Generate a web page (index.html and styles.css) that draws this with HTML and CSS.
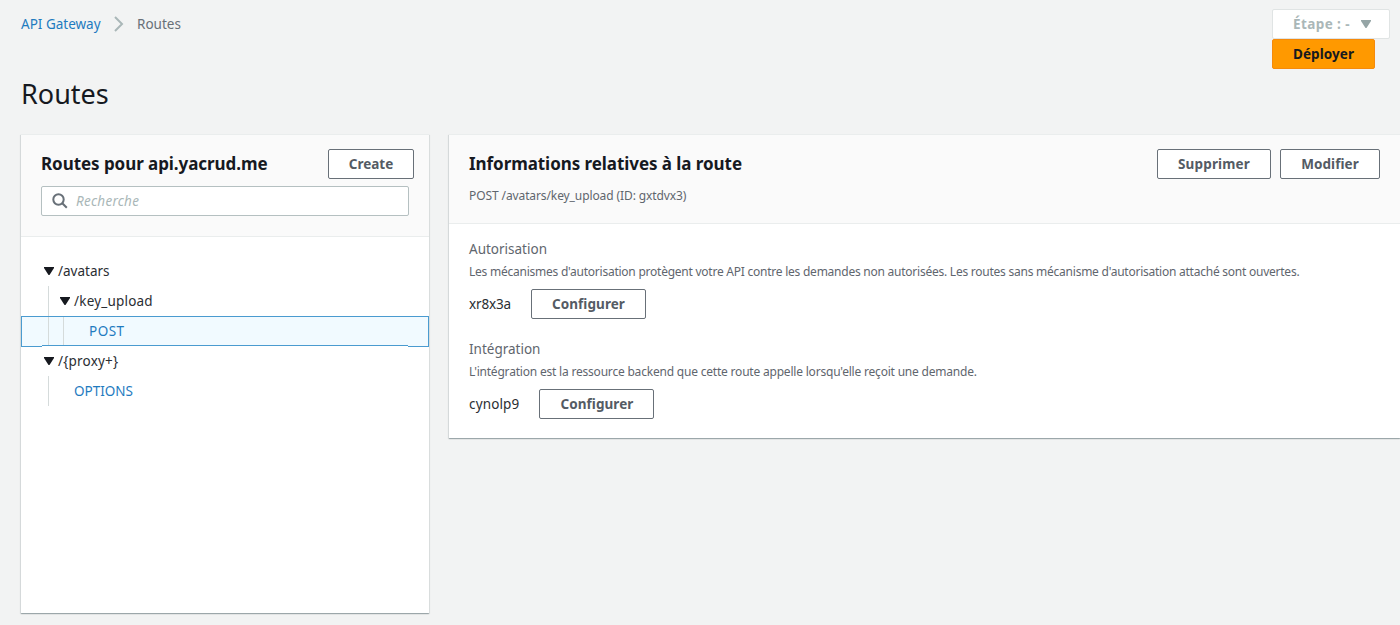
FILE: index.html
```html
<!DOCTYPE html>
<html lang="fr">
<head>
<meta charset="utf-8">
<title>API Gateway - Routes</title>
<link rel="stylesheet" href="styles.css">
</head>
<body>
<header class="topbar">
  <nav class="breadcrumb">
    <a class="crumb-link" href="#">API Gateway</a>
    <svg class="crumb-sep" width="10" height="16" viewBox="0 0 10 16"><path d="M1 1l7 7-7 7"/></svg>
    <span class="crumb-current">Routes</span>
  </nav>
  <div class="stage">
    <button class="btn btn-stage"><span class="stage-name">Étape : -</span><svg width="12" height="10" viewBox="0 0 12 10"><path d="M1 1h10v1L6.500 9h-1L1 2z"/></svg></button>
    <button class="btn btn-primary">Déployer</button>
  </div>
</header>
<h1 class="title">Routes</h1>
<main class="columns">
  <section class="panel routes">
    <div class="panel-head">
      <div class="head-row">
        <h2 class="heading">Routes pour api.yacrud.me</h2>
        <button class="btn btn-create">Create</button>
      </div>
      <div class="search">
        <svg width="16" height="16" viewBox="0 0 16 16"><circle cx="6.500" cy="6.500" r="5.200"/><path d="M10.300 10.300l4.500 4.500"/></svg>
        <span class="placeholder">Recherche</span>
      </div>
    </div>
    <div class="tree">
      <div class="node"><svg class="caret" width="12" height="10" viewBox="0 0 12 10"><path d="M1 1h10v1L6.500 9h-1L1 2z"/></svg><span>/avatars</span></div>
      <div class="node"><i class="guide"></i><svg class="caret" width="12" height="10" viewBox="0 0 12 10"><path d="M1 1h10v1L6.500 9h-1L1 2z"/></svg><span class="path-key">/key_upload</span></div>
      <div class="node selected"><i class="guide"></i><i class="guide"></i><a class="method method-post" href="#">POST</a></div>
      <div class="node"><svg class="caret" width="12" height="10" viewBox="0 0 12 10"><path d="M1 1h10v1L6.500 9h-1L1 2z"/></svg><span class="path-proxy">/{proxy+}</span></div>
      <div class="node"><i class="guide"></i><a class="method" href="#">OPTIONS</a></div>
    </div>
  </section>
  <section class="panel details">
    <div class="panel-head details-head">
      <div>
        <h2 class="heading">Informations relatives à la route</h2>
        <p class="route-id">POST /avatars/key_upload (ID: gxtdvx3)</p>
      </div>
      <div class="actions">
        <button class="btn btn-delete">Supprimer</button>
        <button class="btn btn-edit">Modifier</button>
      </div>
    </div>
    <div class="details-body">
      <div class="group">
        <h3 class="label">Autorisation</h3>
        <p class="hint">Les mécanismes d'autorisation protègent votre API contre les demandes non autorisées. Les routes sans mécanisme d'autorisation attaché sont ouvertes.</p>
        <div class="value"><span class="value-auth">xr8x3a</span><button class="btn btn-config">Configurer</button></div>
      </div>
      <div class="group">
        <h3 class="label">Intégration</h3>
        <p class="hint hint-integ">L'intégration est la ressource backend que cette route appelle lorsqu'elle reçoit une demande.</p>
        <div class="value"><span class="value-integ">cynolp9</span><button class="btn btn-config">Configurer</button></div>
      </div>
    </div>
  </section>
</main>
</body>
</html>
```
FILE: styles.css
```css
*, *::after { box-sizing: border-box; }
body {
  margin: 0;
  width: 1400px;
  height: 625px;
  overflow: hidden;
  background: #f2f3f3;
  color: #16191f;
  font: 14px/20px "Noto Sans", "Open Sans", sans-serif;
}
h1, h2, h3, p { margin: 0; }
a { color: #1f7bbf; text-decoration: none; }
svg { flex: none; }
.topbar { display: flex; justify-content: space-between; height: 69px; padding: 9px 10px 0 21px; }
.breadcrumb { display: flex; align-items: center; height: 30px; font-size: 13.500px; color: #687078; }
.crumb-link { width: 93px; }
.crumb-sep { width: 10px; margin-right: 13px; fill: none; stroke: #aab7b8; stroke-width: 2; }
.stage { display: flex; flex-direction: column; align-items: flex-start; width: 118px; }
.btn {
  display: inline-flex;
  align-items: center;
  justify-content: center;
  height: 30px;
  padding: 0 0 1px;
  border: 1px solid #687078;
  border-radius: 2px;
  background: #fff;
  color: #545b64;
  font: 700 13.500px/20px "Noto Sans", "Open Sans", sans-serif;
  letter-spacing: .07px;
  white-space: nowrap;
}
.btn-stage { width: 118px; gap: 10px; padding-left: 3px; border-color: #e0e4e4; color: #aab7b8; }
.stage-name { letter-spacing: .4px; }
.btn-stage svg { margin-top: 1px; fill: #95a5a6; }
.btn-primary { width: 103px; border-color: #f58a0c; background: #ff9900; color: #16191f; }
.title { height: 65px; padding: 8px 0 0 21px; font-size: 27px; font-weight: 400; line-height: 34px; }
.columns { display: grid; grid-template-columns: 408px 951px; column-gap: 20px; align-items: start; padding-left: 21px; }
.panel { border-top: 1px solid #eaeded; background: #fff; box-shadow: 0 1px 1px 0 rgba(0,28,36,.25), 1px 1px 1px 0 rgba(0,28,36,.06), -1px 1px 1px 0 rgba(0,28,36,.08); }
.routes { height: 479px; }
.details { height: 304px; }
.panel-head { height: 102px; padding: 14px 15px 0 20px; border-bottom: 1px solid #eaeded; background: #fafafa; }
.head-row { display: flex; justify-content: space-between; height: 37px; }
.heading { font-size: 17px; font-weight: 700; line-height: 29px; letter-spacing: -.06px; white-space: nowrap; }
.btn-create { width: 86px; letter-spacing: 0; }
.search { display: flex; align-items: center; width: 368px; height: 30px; padding-left: 10px; border: 1px solid #b5c0c1; border-radius: 2px; background: #fff; }
.search svg { margin-right: 8px; fill: none; stroke: #687078; stroke-width: 2; }
.placeholder { color: #aab7b8; font-size: 13.500px; font-style: italic; letter-spacing: .25px; }
.tree { padding-top: 19px; color: #2a2e33; }
.node { display: flex; align-items: center; height: 30px; padding-left: 22px; font-size: 13.500px; }
.caret { margin-right: 3px; fill: #16191f; }
.guide { width: 1px; height: 30px; margin: 0 10px 0 5px; background: #d5dbdb; }
.guide + .guide { margin-left: 4px; }
.path-key { letter-spacing: .2px; }
.path-proxy { letter-spacing: .2px; }
.selected { position: relative; height: 31px; margin-bottom: -1px; padding: 0 0 1px 21px; border: 1px solid #4a9bd0; background: #f1faff; }
.selected .guide { height: 29px; margin-bottom: -1px; }
/* The bottom outline sits one pixel higher between the row's gutters. */
.selected::after { content: ""; position: absolute; left: 20px; right: 20px; bottom: -1px; height: 2px; border-top: 1px solid #4a9bd0; background: #fff; }
.method { margin-left: 15px; }
.method-post { margin-top: -1px; letter-spacing: .5px; }
.details-head { display: flex; justify-content: space-between; height: 89px; padding-right: 20px; }
.route-id { padding-top: 8px; color: #5f666e; font-size: 12px; line-height: 20px; letter-spacing: -.1px; }
.actions { display: flex; gap: 9px; }
.btn-delete { width: 114px; letter-spacing: .15px; }
.btn-edit { width: 100px; }
.details-body { padding: 15px 20px; }
.group { height: 100px; }
.label { color: #5f666e; font-size: 13.500px; font-weight: 400; line-height: 20px; }
.hint { height: 30px; padding-top: 3px; color: #5f666e; font-size: 12px; line-height: 20px; letter-spacing: -.24px; white-space: nowrap; }
.hint-integ { letter-spacing: -.2px; }
.value { display: flex; align-items: center; gap: 20px; height: 30px; color: #2a2e33; font-size: 13.500px; }
.value-auth { letter-spacing: -.15px; }
.value-integ { letter-spacing: .15px; }
.btn-config { width: 115px; }
```
